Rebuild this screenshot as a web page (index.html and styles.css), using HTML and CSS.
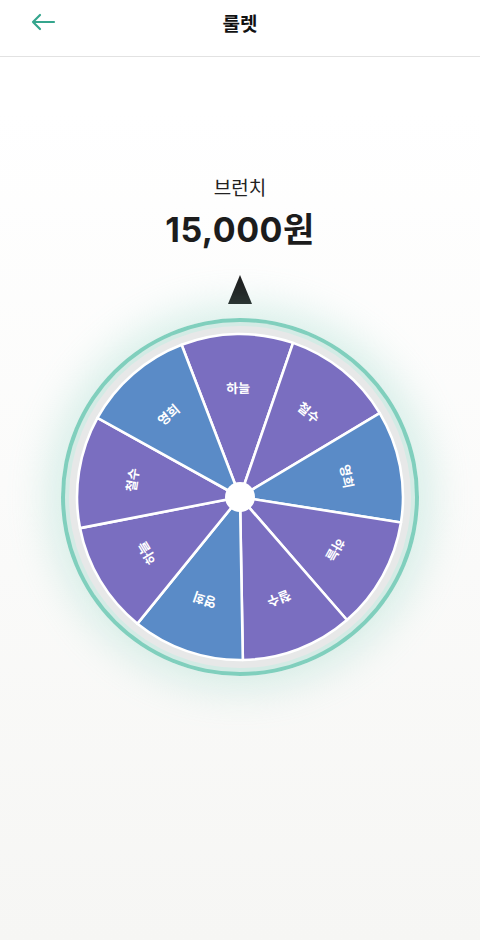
FILE: index.html
```html
<!DOCTYPE html>
<html lang="ko">
<head>
  <meta charset="UTF-8" />
  <meta name="viewport" content="width=device-width, initial-scale=1.0"/>
  <title>룰렛</title>
  <link rel="stylesheet" href="styles.css">
</head>
<body>
  <header class="topbar">
    <div class="topbar-row">
      <button class="back-btn" aria-label="뒤로">
        <svg width="26" height="26" viewBox="0 0 26 26">
          <path d="M24 13H3M10 6l-7 7 7 7" fill="none" stroke="#35a58d" stroke-width="2.2" stroke-linecap="round" stroke-linejoin="round"/>
        </svg>
      </button>
      <h1 class="title">룰렛</h1>
    </div>
  </header>

  <main class="stage">
    <div class="menu-name">브런치</div>
    <div class="price">15,000원</div>

    <div class="pointer"></div>

    <div class="wheel">
      <svg width="358" height="358" viewBox="-1 -1 358 358">
        <circle cx="178" cy="178" r="179" fill="#80cfbd"/>
        <circle cx="178" cy="178" r="175" fill="#d3ebe5"/>
        <circle cx="178" cy="178" r="171" fill="#e7e8e8"/>

        <g transform="rotate(-1 178 178)">
          <g transform="rotate(0 178 178)">
            <path class="seg purple" d="M178 178 L122.25 24.83 A163 163 0 0 1 233.75 24.83 Z"/>
            <text class="seg-label" x="178" y="74">하늘</text>
          </g>
          <g transform="rotate(40 178 178)">
            <path class="seg purple" d="M178 178 L122.25 24.83 A163 163 0 0 1 233.75 24.83 Z"/>
            <text class="seg-label" x="178" y="74">철수</text>
          </g>
          <g transform="rotate(80 178 178)">
            <path class="seg blue" d="M178 178 L122.25 24.83 A163 163 0 0 1 233.75 24.83 Z"/>
            <text class="seg-label" x="178" y="74">영희</text>
          </g>
          <g transform="rotate(120 178 178)">
            <path class="seg purple" d="M178 178 L122.25 24.83 A163 163 0 0 1 233.75 24.83 Z"/>
            <text class="seg-label" x="178" y="74">하늘</text>
          </g>
          <g transform="rotate(160 178 178)">
            <path class="seg purple" d="M178 178 L122.25 24.83 A163 163 0 0 1 233.75 24.83 Z"/>
            <text class="seg-label" x="178" y="74">철수</text>
          </g>
          <g transform="rotate(200 178 178)">
            <path class="seg blue" d="M178 178 L122.25 24.83 A163 163 0 0 1 233.75 24.83 Z"/>
            <text class="seg-label" x="178" y="74">영희</text>
          </g>
          <g transform="rotate(240 178 178)">
            <path class="seg purple" d="M178 178 L122.25 24.83 A163 163 0 0 1 233.75 24.83 Z"/>
            <text class="seg-label" x="178" y="74">하늘</text>
          </g>
          <g transform="rotate(280 178 178)">
            <path class="seg purple" d="M178 178 L122.25 24.83 A163 163 0 0 1 233.75 24.83 Z"/>
            <text class="seg-label" x="178" y="74">철수</text>
          </g>
          <g transform="rotate(320 178 178)">
            <path class="seg blue" d="M178 178 L122.25 24.83 A163 163 0 0 1 233.75 24.83 Z"/>
            <text class="seg-label" x="178" y="74">영희</text>
          </g>
        </g>

        <circle cx="178" cy="178" r="15" fill="#ffffff"/>
      </svg>
    </div>
  </main>
</body>
</html>
```

FILE: styles.css
```css
html, body {
  height: 100%;
}

body {
  margin: 0;
  font-family: "Noto Sans", "Noto Sans CJK KR", sans-serif;
  color: #1e1e1e;
  background: linear-gradient(to bottom, #ffffff 0%, #ffffff 12%, #f6f6f4 100%);
  overflow: hidden;
}

.topbar {
  height: 57px;
  background: #ffffff;
  border-bottom: 1px solid #e2e2e2;
  box-sizing: border-box;
}

.topbar-row {
  position: relative;
  height: 44px;
  display: flex;
  align-items: center;
  justify-content: center;
}

.back-btn {
  position: absolute;
  left: 30px;
  top: 9px;
  padding: 0;
  border: none;
  background: none;
  width: 26px;
  height: 26px;
  display: flex;
}

.title {
  margin: 0;
  font-family: "Noto Sans CJK KR", sans-serif;
  font-size: 19px;
  font-weight: 700;
  color: #111;
}

.stage {
  display: flex;
  flex-direction: column;
  align-items: center;
  padding-top: 116px;
}

.menu-name {
  font-family: "Noto Sans CJK KR", sans-serif;
  font-size: 19px;
  line-height: 28px;
  color: #222;
}

.price {
  margin-top: 7px;
  font-family: Inter, "Noto Sans CJK KR", sans-serif;
  font-size: 34px;
  font-weight: 700;
  line-height: 44px;
  letter-spacing: 0.5px;
  color: #1c1c1c;
}

.pointer {
  margin-top: 23px;
  width: 0;
  height: 0;
  border-left: 12.5px solid transparent;
  border-right: 12.5px solid transparent;
  border-bottom: 29px solid #1c1c1c;
}

.wheel {
  margin-top: 14px;
  width: 358px;
  height: 358px;
  border-radius: 50%;
  box-shadow: 0 0 40px 12px rgba(140, 214, 195, 0.33);
}

.wheel svg {
  display: block;
}

.seg {
  stroke: #ffffff;
  stroke-width: 2.6;
  stroke-linejoin: round;
}

.purple { fill: #7a6ec0; }
.blue { fill: #5a8bc7; }

.seg-label {
  font-family: "Noto Sans CJK KR", sans-serif;
  font-size: 13px;
  font-weight: 600;
  fill: #ffffff;
  text-anchor: middle;
}
```
